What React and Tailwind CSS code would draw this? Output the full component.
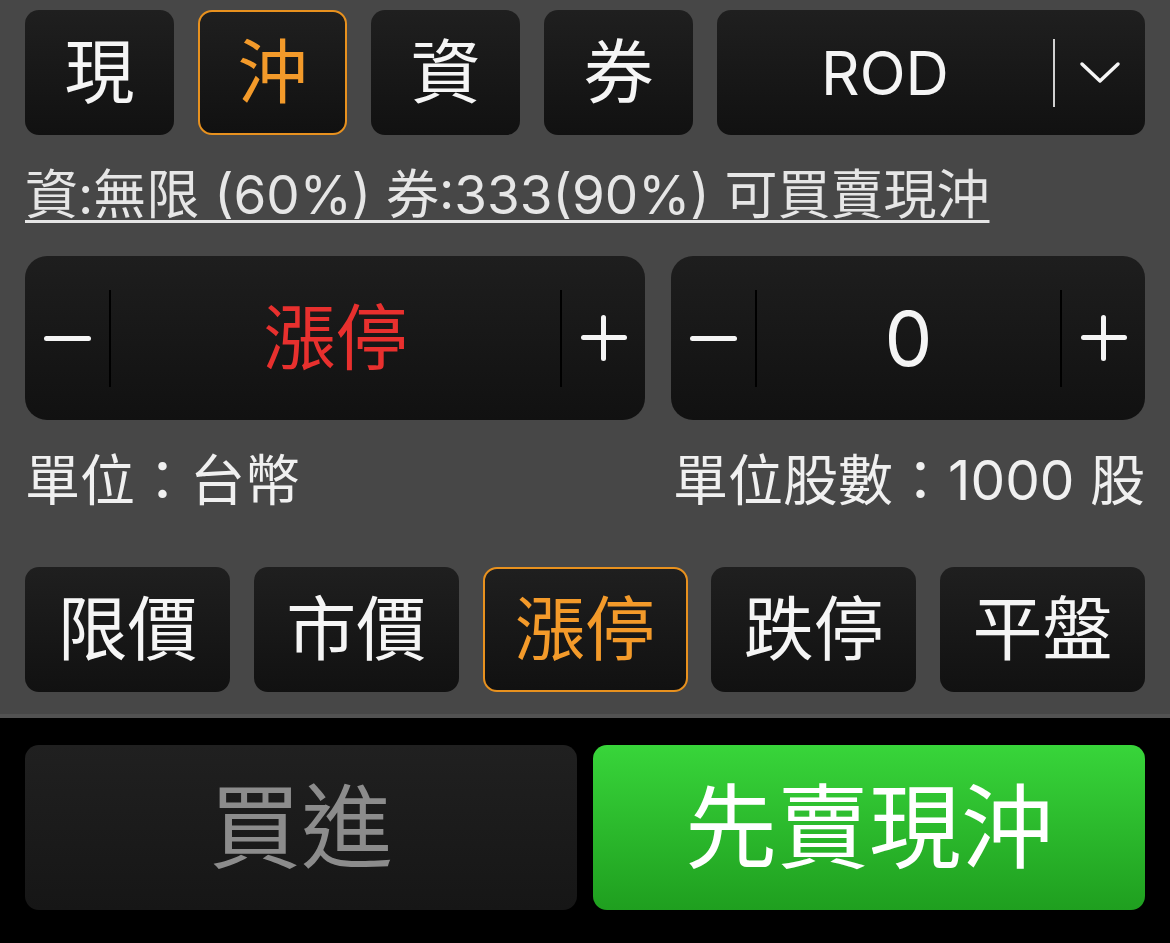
const FONT = { fontFamily: 'Inter, "Noto Sans CJK TC", "Noto Sans", sans-serif' }

const TYPES = [
  { label: '現', active: false },
  { label: '沖', active: true },
  { label: '資', active: false },
  { label: '券', active: false },
]

const PRICES = [
  { label: '限價', active: false },
  { label: '市價', active: false },
  { label: '漲停', active: true },
  { label: '跌停', active: false },
  { label: '平盤', active: false },
]

function Minus() {
  return <span className="block w-[47px] h-[5px] rounded-full bg-[#f5f5f5]" />
}

function Plus() {
  return (
    <span className="relative block w-[46px] h-[46px]">
      <span className="absolute left-0 top-[20px] w-[46px] h-[5px] rounded-full bg-[#f5f5f5]" />
      <span className="absolute top-0 left-[20px] w-[5px] h-[46px] rounded-full bg-[#f5f5f5]" />
    </span>
  )
}

function Stepper({ className, children }) {
  return (
    <div className={`flex items-center h-[164px] rounded-[22px] bg-gradient-to-b from-[#1e1e1e] to-[#111111] ${className}`}>
      <button className="w-[84px] h-full flex items-center justify-center">
        <Minus />
      </button>
      <span className="w-[2px] h-[97px] bg-black" />
      <div className="flex-1 flex items-center justify-center">{children}</div>
      <span className="w-[2px] h-[97px] bg-black" />
      <button className="w-[83px] h-full flex items-center justify-center">
        <Plus />
      </button>
    </div>
  )
}

function KeyButton({ label, active, className }) {
  return (
    <button
      className={`h-[125px] rounded-[14px] bg-gradient-to-b from-[#1f1f1f] to-[#111111] flex items-center justify-center text-[70px] leading-none ${
        active ? 'border-[2px] border-[#e8911e] text-[#f39a2a]' : 'text-[#f5f5f5]'
      } ${className}`}
    >
      {label}
    </button>
  )
}

export default function App() {
  return (
    <div className="w-[1170px] h-[943px] bg-black overflow-hidden" style={FONT}>
      <div className="h-[718px] bg-[#474747] px-[25px] pt-[10px] border-b-[4px] border-[#525252]">
        {/* order type row */}
        <div className="flex gap-[24px]">
          {TYPES.map(t => (
            <KeyButton key={t.label} label={t.label} active={t.active} className="w-[149px]" />
          ))}
          <div className="flex-1 flex items-center h-[125px] rounded-[14px] bg-gradient-to-b from-[#1f1f1f] to-[#111111]">
            <span className="flex-1 text-center text-[60px] leading-none text-[#f5f5f5]">ROD</span>
            <span className="w-[2px] h-[68px] bg-[#d0d0d0]" />
            <span className="w-[90px] flex items-center justify-center">
              <svg width="42" height="24" viewBox="0 0 42 24" fill="none">
                <polyline points="3,3 21,20 39,3" stroke="#f5f5f5" strokeWidth="3.5" strokeLinecap="round" strokeLinejoin="round" />
              </svg>
            </span>
          </div>
        </div>

        <p className="mt-[28px] text-[53px] leading-[64px] text-[#e6e6e6] underline decoration-[3px] underline-offset-[6px] whitespace-nowrap">
          資:無限 (60%) 券:333(90%) 可買賣現沖
        </p>

        {/* price / quantity steppers */}
        <div className="mt-[29px] flex gap-[26px]">
          <Stepper className="w-[620px]">
            <span className="text-[72px] leading-none text-[#e8302e]">漲停</span>
          </Stepper>
          <Stepper className="flex-1">
            <span className="text-[76px] leading-none text-[#f5f5f5]">0</span>
          </Stepper>
        </div>

        <div className="mt-[28px] flex justify-between text-[55px] leading-[64px] text-[#f0f0f0]">
          <span>單位：台幣</span>
          <span>單位股數：1000 股</span>
        </div>

        <div className="mt-[55px] flex justify-between">
          {PRICES.map(p => (
            <KeyButton key={p.label} label={p.label} active={p.active} className="w-[205px]" />
          ))}
        </div>
      </div>

      {/* buy / sell */}
      <div className="flex gap-[16px] px-[25px] pt-[27px]">
        <button className="flex-1 h-[165px] rounded-[14px] bg-gradient-to-b from-[#202020] to-[#161616] text-[92px] leading-none text-[#8c8c8c]">
          買進
        </button>
        <button className="flex-1 h-[165px] rounded-[14px] bg-gradient-to-b from-[#38d53a] to-[#1f9f1f] text-[92px] leading-none text-white">
          先賣現沖
        </button>
      </div>
    </div>
  )
}
